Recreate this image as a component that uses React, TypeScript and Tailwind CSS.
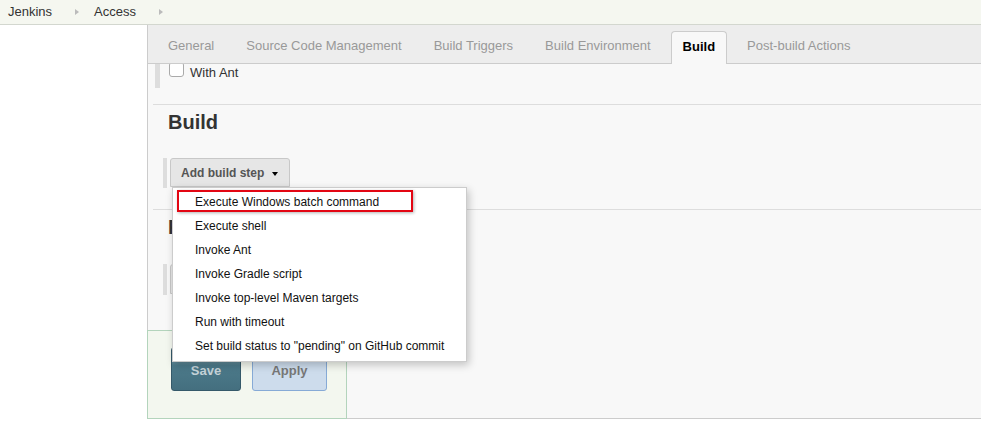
export default function App() {
  const tabs = ["General", "Source Code Management", "Build Triggers", "Build Environment", "Build", "Post-build Actions"];
  const steps = [
    "Execute Windows batch command",
    "Execute shell",
    "Invoke Ant",
    "Invoke Gradle script",
    "Invoke top-level Maven targets",
    "Run with timeout",
    'Set build status to "pending" on GitHub commit',
  ];
  return (
    <div className="w-[981px] h-[437px] bg-white overflow-hidden font-['Liberation_Sans',Arial,sans-serif] text-[#333]">
      {/* breadcrumb */}
      <div className="h-[25px] bg-[#f5f7f0] border-b border-[#d3d7cf] flex items-center pl-[8px] text-[13px]">
        <span>Jenkins</span>
        <span className="ml-[23px] w-0 h-0 border-y-[3px] border-y-transparent border-l-[4px] border-l-[#bbb]" />
        <span className="ml-[15px]">Access</span>
        <span className="ml-[23px] w-0 h-0 border-y-[3px] border-y-transparent border-l-[4px] border-l-[#bbb]" />
      </div>

      <div className="flex">
        <div className="w-[147px] shrink-0" />
        <div className="flex-1 h-[394px] flex flex-col border-l border-b border-[#ccc] bg-[#f8f8f8]">
          {/* tab bar */}
          <div className="relative z-[1] h-[39px] shrink-0 bg-[#ededed] border-b border-[#ccc] flex items-end pl-[8px] gap-[8px] text-[13px]">
            {tabs.map((t) =>
              t === "Build" ? (
                <div
                  key={t}
                  className="h-[33px] -mb-px px-[11px] pb-[2px] flex items-center bg-[#f8f8f8] border border-b-0 border-[#ccc] rounded-t-[4px] font-bold text-black"
                >
                  {t}
                </div>
              ) : (
                <div key={t} className="h-[32px] px-[11px] pb-[2px] flex items-center border border-transparent text-[#999]">
                  {t}
                </div>
              )
            )}
          </div>

          {/* content */}
          <div className="flex-1 min-h-0 relative">
            <div className="ml-[7px] h-[24px] border-l-[5px] border-[#ddd] pl-[9px] flex items-start text-[13px]">
              <span className="w-[15px] h-[15px] -mt-[2px] border border-[#aaa] rounded-[3px] bg-white" />
              <span className="ml-[6px] leading-[15px] mt-[1px]">With Ant</span>
            </div>

            <div className="ml-[5px] mt-[16px] border-t border-[#ddd]" />
            <h2 className="ml-[20px] mt-[5px] text-[20px] leading-[24px] font-bold">Build</h2>

            <div className="relative z-10 ml-[15px] mt-[24px] h-[30px] border-l-[4px] border-[#ddd] pl-[3px]">
              <div className="w-[120px] h-[29px] bg-[#e6e6e6] border border-[#c8c8c8] rounded-t-[3px] flex items-center pl-[10px] text-[12px] font-bold text-[#555]">
                Add build step
                <span className="ml-[8px] mt-[2px] w-0 h-0 border-x-[3px] border-x-transparent border-t-[4px] border-t-black" />
              </div>

              {/* dropdown menu */}
              <div className="absolute left-[5px] top-[29px] w-[295px] h-[175px] bg-white border border-[#ccc] shadow-[2px_3px_8px_rgba(0,0,0,0.22)] pt-[2px] text-[12px] text-[#111]">
                <div className="absolute left-[4px] top-[2px] w-[236px] h-[22px] border-2 border-[#e30613] shadow-[1px_1px_3px_rgba(0,0,0,0.3)]" />
                {steps.map((s) => (
                  <div key={s} className="h-[24px] leading-[24px] pl-[22px] whitespace-nowrap">
                    {s}
                  </div>
                ))}
              </div>
            </div>

            <div className="ml-[5px] mt-[21px] border-t border-[#ddd]" />
            <h2 className="ml-[20px] mt-[5px] text-[20px] leading-[24px] font-bold whitespace-nowrap">Post-build Actions</h2>
            <div className="ml-[15px] mt-[25px] h-[31px] border-l-[4px] border-[#ddd] pl-[3px]">
              <div className="w-[150px] h-[30px] bg-[#e6e6e6] border border-[#c8c8c8] rounded-t-[3px] flex items-center pl-[10px] text-[12px] font-bold text-[#555]">
                Add post-build action
              </div>
            </div>
          </div>

          {/* sticky save bar */}
          <div className="-ml-px -mb-px w-[200px] h-[89px] shrink-0 bg-[#f3f7ef] border border-[#b3d4bc] flex items-end gap-[11px] pl-[23px] pb-[27px] text-[13px] font-bold">
            <div className="w-[70px] h-[44px] rounded-[3px] border border-[#35596a] bg-[linear-gradient(#a9bcc3,#4c7a8a_42%,#446f7f)] flex items-center justify-center pt-[4px] text-[#c4d2d8]">
              Save
            </div>
            <div className="w-[75px] h-[44px] rounded-[3px] border border-[#86aad6] bg-[#cddcec] flex items-center justify-center pt-[4px] text-[#777]">
              Apply
            </div>
          </div>
        </div>
      </div>
    </div>
  );
}
